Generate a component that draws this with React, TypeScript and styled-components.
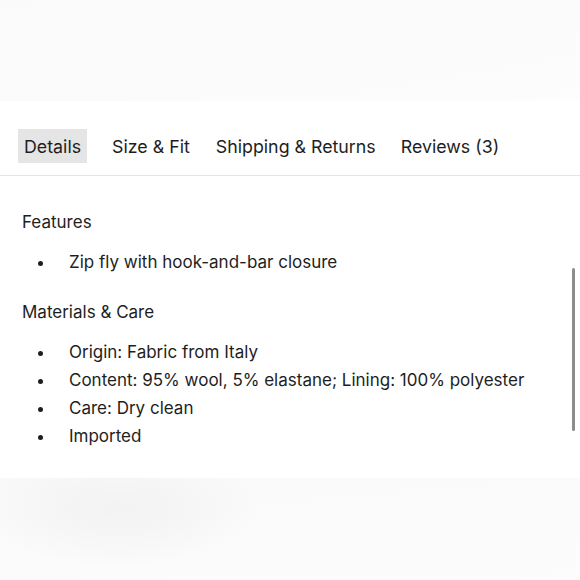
import React from "react";
import styled, { createGlobalStyle } from "styled-components";

const GlobalStyle = createGlobalStyle`
  html, body {
    margin: 0;
    padding: 0;
    background: #fff;
  }
  body {
    font-family: Inter, "Noto Sans", sans-serif;
    color: #1e1e1e;
    -webkit-font-smoothing: antialiased;
  }
`;

const Page = styled.div`
  position: relative;
  width: 580px;
  height: 580px;
  overflow: hidden;
  display: flex;
  flex-direction: column;
  background: #fff;
`;

const TopBanner = styled.div`
  height: 101px;
  flex-shrink: 0;
  background: linear-gradient(170deg, #fafafa 0%, #fbfbfb 60%, #fdfdfd 100%);
`;

const TabBar = styled.div`
  display: flex;
  align-items: center;
  padding: 28px 18px 12px;
  border-bottom: 1px solid #e4e4e4;
`;

const Tab = styled.button<{ $active?: boolean; $gap: number }>`
  font: inherit;
  font-size: 17.8px;
  color: #1e1e1e;
  border: none;
  background: ${(p) => (p.$active ? "#e5e5e5" : "transparent")};
  height: 34px;
  padding: 0 6px;
  margin-right: ${(p) => p.$gap}px;
  cursor: pointer;
  white-space: nowrap;
`;

const Content = styled.div`
  padding: 34px 22px 0;
  font-size: 17px;
  flex: 1;
`;

const Heading = styled.div`
  line-height: 24px;
  margin-bottom: 14px;
`;

const List = styled.ul`
  list-style: none;
  margin: 0 0 24px;
  padding: 0;
`;

const Item = styled.li`
  display: flex;
  align-items: center;
  line-height: 28px;

  &::before {
    content: "";
    width: 5px;
    height: 5px;
    border-radius: 50%;
    background: #1e1e1e;
    margin: 2px 0 0 16px;
    flex-shrink: 0;
  }

  span {
    margin-left: 26px;
  }
`;

const BottomBanner = styled.div`
  height: 102px;
  flex-shrink: 0;
  background:
    radial-gradient(ellipse 140px 60px at 120px 30px, #f2f2f2 0%, rgba(245, 245, 245, 0) 100%),
    linear-gradient(175deg, #f9f9f9 0%, #fbfbfb 60%, #fcfcfc 100%);
`;

const ScrollThumb = styled.div`
  position: absolute;
  right: 5px;
  top: 268px;
  width: 3px;
  height: 163px;
  border-radius: 2px;
  background: #8c8c8c;
`;

const tabs = [
  { label: "Details", gap: 19 },
  { label: "Size & Fit", gap: 14 },
  { label: "Shipping & Returns", gap: 13 },
  { label: "Reviews (3)", gap: 0 },
];

export default function App() {
  return (
    <Page>
      <GlobalStyle />
      <TopBanner />
      <TabBar>
        {tabs.map((t, i) => (
          <Tab key={t.label} $active={i === 0} $gap={t.gap}>
            {t.label}
          </Tab>
        ))}
      </TabBar>
      <Content>
        <Heading>Features</Heading>
        <List>
          <Item>
            <span>Zip fly with hook-and-bar closure</span>
          </Item>
        </List>
        <Heading>Materials &amp; Care</Heading>
        <List>
          <Item>
            <span>Origin: Fabric from Italy</span>
          </Item>
          <Item>
            <span>Content: 95% wool, 5% elastane; Lining: 100% polyester</span>
          </Item>
          <Item>
            <span>Care: Dry clean</span>
          </Item>
          <Item>
            <span>Imported</span>
          </Item>
        </List>
      </Content>
      <BottomBanner />
      <ScrollThumb />
    </Page>
  );
}
